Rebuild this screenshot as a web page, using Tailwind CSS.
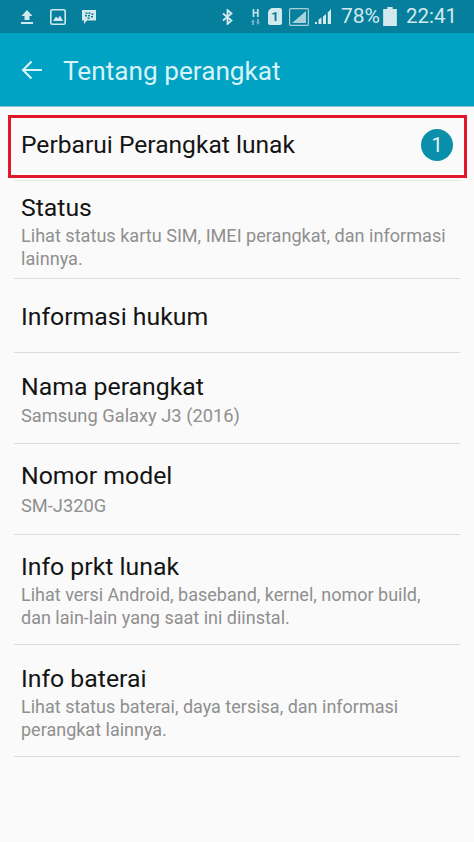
<!DOCTYPE html>
<html lang="id">
<head>
  <meta charset="UTF-8" />
  <title>Tentang perangkat</title>
  <script src="https://cdn.jsdelivr.net/npm/@tailwindcss/browser@4"></script>
</head>
<body class="bg-[#fafafa] font-['Roboto',sans-serif] w-[474px] h-[842px] overflow-hidden">
  <!-- status bar -->
  <div class="h-[33px] bg-[#057f9b] flex items-center pl-[20px] pr-[17px] text-[#d3e9ee]">
    <svg class="w-[14px] h-[16px]" viewBox="0 0 14 16" fill="currentColor"><path d="M7 1 L12.5 7 H9.5 V11 H4.5 V7 H1.5 Z"/><rect x="1" y="13" width="12" height="2"/></svg>
    <svg class="w-[16px] h-[16px] ml-[16px]" viewBox="0 0 16 16"><rect x="0.8" y="0.8" width="14.4" height="14.4" rx="1.5" fill="none" stroke="currentColor" stroke-width="1.6"/><path d="M3 12 L6 7.5 L8 9.5 L10 6.5 L13 12 Z" fill="currentColor"/></svg>
    <svg class="w-[16px] h-[16px] ml-[15px]" viewBox="0 0 16 16"><path d="M1 1 H15 V11.5 H6 L3 15 V11.5 H1 Z" fill="currentColor"/><g fill="#057f9b"><rect x="4.5" y="3.5" width="2" height="1.5"/><rect x="7.5" y="3.5" width="2" height="1.5"/><rect x="10.5" y="4.5" width="2" height="1.5"/><rect x="4" y="6" width="2" height="1.5"/><rect x="7" y="6" width="2" height="1.5"/><rect x="10" y="7" width="2" height="1.5"/><rect x="6.5" y="8.5" width="2" height="1.5"/></g></svg>

    <svg class="w-[11px] h-[16px] ml-auto" viewBox="0 0 11 16" fill="none" stroke="currentColor" stroke-width="1.8"><path d="M1 4.5 L9.5 11.5 L5.5 15 V1 L9.5 4.5 L1 11.5"/></svg>
    <div class="ml-[18px] w-[9px] flex flex-col items-center leading-none">
      <span class="text-[10px] font-bold leading-[10px]">H</span>
      <svg class="w-[9px] h-[6px] text-[#6fb1c1]" viewBox="0 0 9 6" fill="currentColor"><path d="M2 0 L4 3 H3 V6 H1 V3 H0 Z M7 6 L9 3 H8 V0 H6 V3 H5 Z"/></svg>
    </div>
    <div class="ml-[8px] w-[14px] h-[17px] bg-[#d3e9ee] rounded-[2px] rounded-tl-[5px] flex items-center justify-center text-[#057f9b] text-[13px] font-bold leading-none">1</div>
    <svg class="w-[20px] h-[18px] ml-[7px]" viewBox="0 0 20 18"><rect x="0.6" y="0.6" width="18.8" height="16.8" rx="1" fill="none" stroke="#a9d1da" stroke-width="1.2"/><path d="M3 15 L17 3 V15 Z" fill="#a9d1da"/></svg>
    <svg class="w-[17px] h-[17px] ml-[6px]" viewBox="0 0 17 17" fill="currentColor"><rect x="0" y="14" width="2" height="2"/><path d="M3.5 11.5 L6.5 9.5 V16 H3.5 Z"/><path d="M8 8.5 L11 6 V16 H8 Z"/><path d="M12.8 4.5 L16 1 V16 H12.8 Z"/></svg>
    <span class="ml-[9px] text-[21px] leading-none">78%</span>
    <svg class="w-[14px] h-[19px] ml-[3px]" viewBox="0 0 13 18" fill="currentColor"><path d="M4 0 H9 V2 H13 V18 H0 V2 H4 Z"/></svg>
    <span class="ml-[9px] text-[20.5px] leading-none">22:41</span>
  </div>

  <!-- action bar -->
  <div class="h-[74px] bg-[#01a3c4] border-b border-[#7fc4d4] flex items-center pl-[21px] text-[#d8f3f8]">
    <svg class="w-[22px] h-[20px]" viewBox="0 0 22 20" fill="none" stroke="currentColor" stroke-width="2.2"><path d="M21 10 H2 M10.5 1.5 L2 10 L10.5 18.5"/></svg>
    <span class="ml-[20px] mt-[3px] text-[26.2px] leading-none">Tentang perangkat</span>
  </div>

  <!-- list -->
  <div class="px-[14px]">
    <div class="-ml-[6px] -mr-[7px] mt-[8px] h-[63px] border-[3px] border-[#e3172c] flex items-center pl-[10px] pr-[11px] pb-[3px]">
      <span class="text-[24.6px] leading-none text-[#141414]">Perbarui Perangkat lunak</span>
      <span class="ml-auto w-[32px] h-[32px] rounded-full bg-[#0a8fab] text-[#e6f4f7] text-[20px] flex items-center justify-center">1</span>
    </div>

    <div class="border-t border-t-[#e8e8e8] border-b border-[#dcdcdc] mt-[2px] pl-[7px] pr-[10px] pt-[12px] h-[99px]">
      <div class="text-[24.8px] leading-[30px] text-[#141414]">Status</div>
      <div class="text-[18.1px] leading-[23px] text-[#8f8f8f] mt-[1px]">Lihat status kartu SIM, IMEI perangkat, dan informasi lainnya.</div>
    </div>

    <div class="border-b border-[#dcdcdc] pl-[7px] pr-[10px] pt-[2px] h-[74px] flex items-center">
      <div class="text-[24.8px] leading-[30px] text-[#141414]">Informasi hukum</div>
    </div>

    <div class="border-b border-[#dcdcdc] pl-[7px] pr-[10px] pt-[19px] h-[91px]">
      <div class="text-[24.8px] leading-[30px] text-[#141414]">Nama perangkat</div>
      <div class="text-[18.3px] leading-[22px] text-[#8f8f8f] mt-[3px]">Samsung Galaxy J3 (2016)</div>
    </div>

    <div class="border-b border-[#dcdcdc] pl-[7px] pr-[10px] pt-[17px] h-[91px]">
      <div class="text-[24.8px] leading-[30px] text-[#141414]">Nomor model</div>
      <div class="text-[18.3px] leading-[22px] text-[#8f8f8f] mt-[4px]">SM-J320G</div>
    </div>

    <div class="border-b border-[#dcdcdc] pl-[7px] pr-[10px] pt-[17px] h-[110px]">
      <div class="text-[24.8px] leading-[30px] text-[#141414]">Info prkt lunak</div>
      <div class="text-[18px] leading-[23px] text-[#8f8f8f] mt-[1px]">Lihat versi Android, baseband, kernel, nomor build, dan lain-lain yang saat ini diinstal.</div>
    </div>

    <div class="border-b border-[#dcdcdc] pl-[7px] pr-[10px] pt-[19px] h-[112px]">
      <div class="text-[24.8px] leading-[30px] text-[#141414]">Info baterai</div>
      <div class="text-[18px] leading-[23px] text-[#8f8f8f] mt-[1px]">Lihat status baterai, daya tersisa, dan informasi perangkat lainnya.</div>
    </div>
  </div>
</body>
</html>
